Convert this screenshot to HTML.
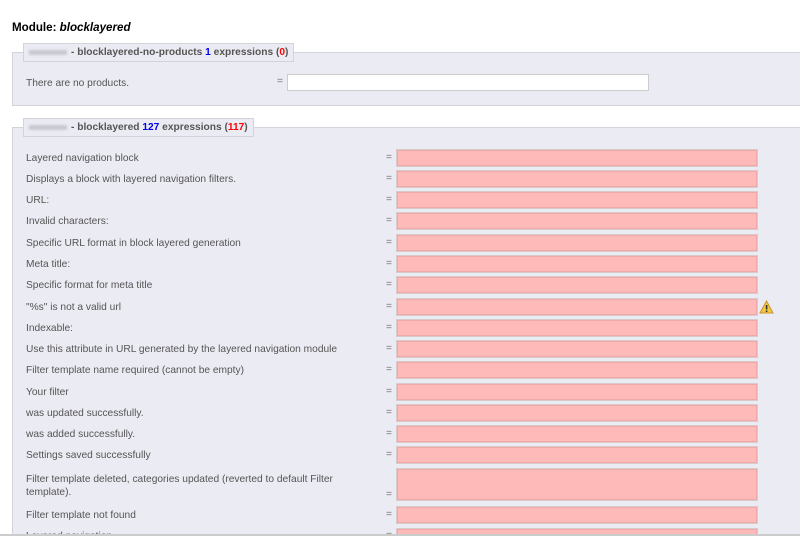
<!DOCTYPE html>
<html style="overflow:hidden;height:536px"><head><meta charset="utf-8"><style>
*{margin:0;padding:0;box-sizing:border-box}
body{width:800px;height:536px;overflow:hidden;background:#fff;font-family:"Liberation Sans",Arial,sans-serif;font-size:10.2px;color:#555;position:relative}
.a{position:absolute}
h1{position:absolute;left:12px;top:21px;font-size:11.6px;font-weight:bold;color:#000}
.fs{position:absolute;left:12px;width:800px;background:#ebebf3;border:1px solid #d3d3db;border-right:none}
.lg{position:absolute;left:23px;height:19px;background:#ebebf3;border:1px solid #d3d3db;font-size:10.2px;font-weight:bold;color:#555;padding:3px 0 0 5px;white-space:nowrap}
.blur{display:inline-block;width:38px;height:5px;background:#c8c8d0;margin-right:4px;vertical-align:middle;filter:blur(1px)}
.b{color:#0000ee}.r{color:#f00}
.lb{position:absolute;left:26px;color:#555;line-height:13px}
.eq{position:absolute;left:386px;color:#777}
.in{position:absolute;left:396px;width:362px;height:18px;background:#feb9b9;border:1px solid #d9cbcb;box-shadow:inset 0 0 0 1px #f0a8a8}
</style></head><body>
<h1>Module: <i>blocklayered</i></h1>
<div class="fs" style="top:52px;height:54px"></div>
<div class="lg" style="top:43px;width:271px"><span class="blur"></span>- blocklayered-no-products <span class="b">1</span> expressions (<span class="r">0</span>)</div>
<div class="lb" style="top:77px">There are no products.</div>
<div class="eq" style="left:277px;top:76px">=</div>
<div class="a" style="left:287px;top:74px;width:362px;height:17px;background:#fff;border:1px solid #ccc"></div>
<div class="fs" style="top:127px;height:420px"></div>
<div class="lg" style="top:118px;width:231px"><span class="blur"></span>- blocklayered <span class="b">127</span> expressions (<span class="r">117</span>)</div>
<div class="lb" style="top:152px">Layered navigation block</div><div class="eq" style="top:152px">=</div><div class="in" style="top:149px"></div>
<div class="lb" style="top:173px">Displays a block with layered navigation filters.</div><div class="eq" style="top:173px">=</div><div class="in" style="top:170px"></div>
<div class="lb" style="top:194px">URL:</div><div class="eq" style="top:194px">=</div><div class="in" style="top:191px"></div>
<div class="lb" style="top:215px">Invalid characters:</div><div class="eq" style="top:215px">=</div><div class="in" style="top:212px"></div>
<div class="lb" style="top:237px">Specific URL format in block layered generation</div><div class="eq" style="top:237px">=</div><div class="in" style="top:234px"></div>
<div class="lb" style="top:258px">Meta title:</div><div class="eq" style="top:258px">=</div><div class="in" style="top:255px"></div>
<div class="lb" style="top:279px">Specific format for meta title</div><div class="eq" style="top:279px">=</div><div class="in" style="top:276px"></div>
<div class="lb" style="top:301px">"%s" is not a valid url</div><div class="eq" style="top:301px">=</div><div class="in" style="top:298px"></div>
<svg class="a" style="left:759px;top:300px" width="15" height="14" viewBox="0 0 15 14"><path d="M7.5 1 L14 13 L1 13 Z" fill="#f5c842" stroke="#c9932a" stroke-width="1"/><rect x="6.8" y="5" width="1.6" height="4.5" fill="#333"/><rect x="6.8" y="10.5" width="1.6" height="1.5" fill="#333"/></svg>
<div class="lb" style="top:322px">Indexable:</div><div class="eq" style="top:322px">=</div><div class="in" style="top:319px"></div>
<div class="lb" style="top:343px">Use this attribute in URL generated by the layered navigation module</div><div class="eq" style="top:343px">=</div><div class="in" style="top:340px"></div>
<div class="lb" style="top:364px">Filter template name required (cannot be empty)</div><div class="eq" style="top:364px">=</div><div class="in" style="top:361px"></div>
<div class="lb" style="top:386px">Your filter</div><div class="eq" style="top:386px">=</div><div class="in" style="top:383px"></div>
<div class="lb" style="top:407px">was updated successfully.</div><div class="eq" style="top:407px">=</div><div class="in" style="top:404px"></div>
<div class="lb" style="top:428px">was added successfully.</div><div class="eq" style="top:428px">=</div><div class="in" style="top:425px"></div>
<div class="lb" style="top:449px">Settings saved successfully</div><div class="eq" style="top:449px">=</div><div class="in" style="top:446px"></div>
<div class="lb" style="top:473px">Filter template deleted, categories updated (reverted to default Filter<br>template).</div><div class="eq" style="top:489px">=</div><div class="in" style="top:468px;height:33px"></div>
<div class="lb" style="top:509px">Filter template not found</div><div class="eq" style="top:509px">=</div><div class="in" style="top:506px"></div>
<div class="lb" style="top:530px">Layered navigation</div><div class="eq" style="top:530px">=</div><div class="in" style="top:528px"></div>
<div class="a" style="left:0;top:534px;width:800px;height:20px;background:#fff;border-top:2px solid #ccc"></div>
</body></html>
